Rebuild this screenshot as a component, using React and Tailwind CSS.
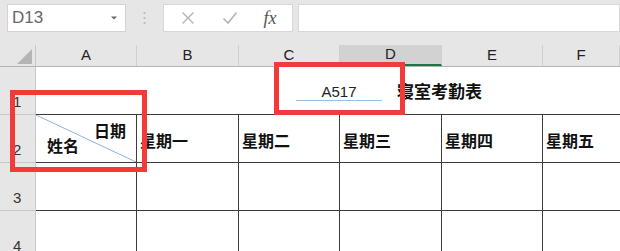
import React from "react";

const cols = [
  { k: "A", w: "w-[101px]" },
  { k: "B", w: "w-[102px]" },
  { k: "C", w: "w-[101px]" },
  { k: "D", w: "w-[102px]" },
  { k: "E", w: "w-[101px]" },
  { k: "F", w: "flex-1" },
];

const cjk = { fontFamily: '"Noto Sans CJK SC", "Noto Sans", sans-serif' };

function RowHead({ n }) {
  return (
    <div className="w-[36px] shrink-0 h-full bg-[#e6e6e6] border-r border-b border-[#c8c8c8] flex items-end pl-[13px] pb-[1px] text-[15px] text-[#333]" style={{ fontFamily: '"Liberation Sans", Arial, sans-serif' }}>
      {n}
    </div>
  );
}

export default function App() {
  const days = ["星期一", "星期二", "星期三", "星期四", "星期五"];
  return (
    <div className="relative w-[620px] h-[251px] overflow-hidden bg-white" style={{ fontFamily: '"Liberation Sans", Arial, sans-serif' }}>
      {/* formula bar */}
      <div className="h-[45px] bg-[#e6e6e6] flex items-start pt-[4px] pl-[7px]">
        <div className="w-[119px] h-[28px] bg-white border border-[#d4d4d4] flex items-center justify-between pl-[4px] pr-[8px]">
          <span className="text-[17px] text-[#666]">D13</span>
          <svg width="6" height="4" viewBox="0 0 6 4"><path d="M0 0.5h6L3 3.5z" fill="#666" /></svg>
        </div>
        <div className="w-[37px] h-[28px] flex items-center justify-center">
          <svg width="3" height="14" viewBox="0 0 3 14">
            <circle cx="1.5" cy="2" r="1.1" fill="#b8b8b8" />
            <circle cx="1.5" cy="7" r="1.1" fill="#b8b8b8" />
            <circle cx="1.5" cy="12" r="1.1" fill="#b8b8b8" />
          </svg>
        </div>
        <div className="w-[130px] h-[28px] bg-white border border-[#d8d8d8] flex items-center">
          <div className="w-[44px] flex justify-center pl-[4px]">
            <svg width="14" height="14" viewBox="0 0 14 14"><path d="M1.5 1.5l11 11M12.5 1.5l-11 11" stroke="#b4b4b4" strokeWidth="1.4" /></svg>
          </div>
          <div className="w-[42px] flex justify-center pl-[2px]">
            <svg width="16" height="14" viewBox="0 0 16 14"><path d="M1.5 7.5l4.5 4.5 8.5-10.5" stroke="#b4b4b4" strokeWidth="1.6" fill="none" /></svg>
          </div>
          <div className="flex-1 flex justify-center pr-[2px]">
            <span className="text-[18px] italic text-[#555]" style={{ fontFamily: '"Liberation Serif", "Times New Roman", serif' }}>fx</span>
          </div>
        </div>
        <div className="ml-[5px] flex-1 h-[28px] bg-white border border-[#d8d8d8]" />
      </div>

      {/* column headers */}
      <div className="h-[22px] flex bg-[#e6e6e6] border-b border-[#b4b4b4]">
        <div className="w-[36px] shrink-0 border-r border-[#c8c8c8] relative">
          <svg className="absolute right-[3px] bottom-[2px]" width="15" height="15" viewBox="0 0 15 15"><path d="M15 0V15H0z" fill="#b5b5b5" /></svg>
        </div>
        {cols.map((c) => (
          <div
            key={c.k}
            className={`${c.w} shrink-0 flex items-center justify-center text-[15px] text-[#222] border-r border-[#cfcfcf] ${c.k === "D" ? "bg-[#d2d2d2] border-b-2 border-b-[#217346]" : ""}`}
          >
            {c.k}
          </div>
        ))}
      </div>

      {/* row 1 */}
      <div className="h-[48px] flex">
        <RowHead n="1" />
        <div className="flex-1 relative border-b border-[#3c3c3c]">
          <div className="absolute left-[260px] top-[14px] w-[86px] text-center text-[15px] text-[#222]">A517</div>
          <div className="absolute left-[260px] top-[33px] w-[86px] h-px bg-[#9cc2e5]" />
          <div className="absolute left-[361px] top-[11px] text-[17px] font-bold text-[#111]" style={cjk}>寝室考勤表</div>
        </div>
      </div>

      {/* row 2 */}
      <div className="h-[48px] flex">
        <RowHead n="2" />
        {cols.map((c, i) => (
          <div key={c.k} className={`${c.w} shrink-0 relative border-r border-b border-[#3c3c3c] ${i === 5 ? "border-r-0" : ""}`}>
            {i === 0 ? (
              <>
                <svg className="absolute inset-0" width="100%" height="100%" viewBox="0 0 100 47" preserveAspectRatio="none">
                  <path d="M0 0L100 47" stroke="#8fb3d6" strokeWidth="1" vectorEffect="non-scaling-stroke" />
                </svg>
                <span className="absolute left-[58px] top-[3px] text-[16px] font-bold text-[#111]" style={cjk}>日期</span>
                <span className="absolute left-[11px] top-[18px] text-[16px] font-bold text-[#111]" style={cjk}>姓名</span>
              </>
            ) : (
              <span className="absolute left-[3px] top-[13px] text-[16px] font-bold text-[#111]" style={cjk}>{days[i - 1]}</span>
            )}
          </div>
        ))}
      </div>

      {/* rows 3,4 */}
      {["3", "4"].map((n) => (
        <div key={n} className="h-[48px] flex">
          <RowHead n={n} />
          {cols.map((c, i) => (
            <div key={c.k} className={`${c.w} shrink-0 border-r border-b border-[#3c3c3c] ${i === 5 ? "border-r-0" : ""}`} />
          ))}
        </div>
      ))}

      {/* red annotation boxes */}
      <div className="absolute left-[10px] top-[90px] w-[137px] h-[82px] border-[5px] border-[#f23a3a]" />
      <div className="absolute left-[274px] top-[62px] w-[131px] h-[53px] border-[5px] border-[#f23a3a]" />
    </div>
  );
}
